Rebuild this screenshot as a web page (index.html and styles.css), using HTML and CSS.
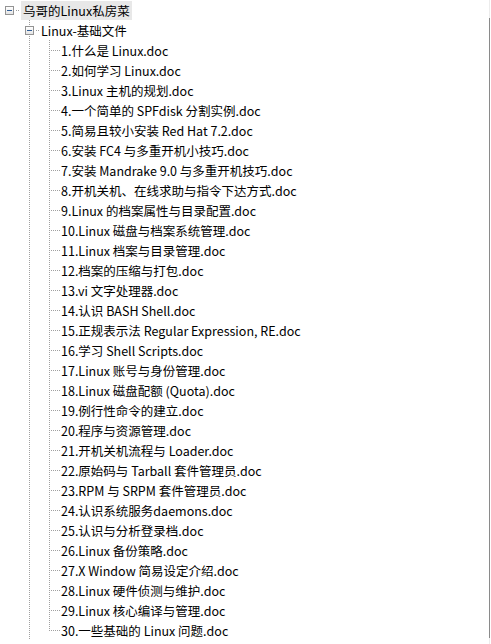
FILE: index.html
```html
<!DOCTYPE html>
<html lang="zh-CN">
<head>
<meta charset="utf-8">
<title>乌哥的Linux私房菜</title>
<link rel="stylesheet" href="styles.css">
</head>
<body>
<div class="page">
  <div class="tree">
    <div class="row">
      <span class="cell exp-root"><span class="box"><span class="minus"></span></span></span>
      <span class="label sel">乌哥的Linux私房菜</span>
    </div>
    <div class="row">
      <span class="cell"></span>
      <span class="cell exp-child"><span class="box"><span class="minus"></span></span></span>
      <span class="label">Linux-基础文件</span>
    </div>
    <div class="row"><span class="cell"></span><span class="cell vline"></span><span class="cell branch"></span><span class="label">1.什么是 Linux.doc</span></div>
    <div class="row"><span class="cell"></span><span class="cell vline"></span><span class="cell branch"></span><span class="label">2.如何学习 Linux.doc</span></div>
    <div class="row"><span class="cell"></span><span class="cell vline"></span><span class="cell branch"></span><span class="label">3.Linux 主机的规划.doc</span></div>
    <div class="row"><span class="cell"></span><span class="cell vline"></span><span class="cell branch"></span><span class="label">4.一个简单的 SPFdisk 分割实例.doc</span></div>
    <div class="row"><span class="cell"></span><span class="cell vline"></span><span class="cell branch"></span><span class="label">5.简易且较小安装 Red Hat 7.2.doc</span></div>
    <div class="row"><span class="cell"></span><span class="cell vline"></span><span class="cell branch"></span><span class="label">6.安装 FC4 与多重开机小技巧.doc</span></div>
    <div class="row"><span class="cell"></span><span class="cell vline"></span><span class="cell branch"></span><span class="label">7.安装 Mandrake 9.0 与多重开机技巧.doc</span></div>
    <div class="row"><span class="cell"></span><span class="cell vline"></span><span class="cell branch"></span><span class="label">8.开机关机、在线求助与指令下达方式.doc</span></div>
    <div class="row"><span class="cell"></span><span class="cell vline"></span><span class="cell branch"></span><span class="label">9.Linux 的档案属性与目录配置.doc</span></div>
    <div class="row"><span class="cell"></span><span class="cell vline"></span><span class="cell branch"></span><span class="label">10.Linux 磁盘与档案系统管理.doc</span></div>
    <div class="row"><span class="cell"></span><span class="cell vline"></span><span class="cell branch"></span><span class="label">11.Linux 档案与目录管理.doc</span></div>
    <div class="row"><span class="cell"></span><span class="cell vline"></span><span class="cell branch"></span><span class="label">12.档案的压缩与打包.doc</span></div>
    <div class="row"><span class="cell"></span><span class="cell vline"></span><span class="cell branch"></span><span class="label">13.vi 文字处理器.doc</span></div>
    <div class="row"><span class="cell"></span><span class="cell vline"></span><span class="cell branch"></span><span class="label">14.认识 BASH Shell.doc</span></div>
    <div class="row"><span class="cell"></span><span class="cell vline"></span><span class="cell branch"></span><span class="label">15.正规表示法 Regular Expression, RE.doc</span></div>
    <div class="row"><span class="cell"></span><span class="cell vline"></span><span class="cell branch"></span><span class="label">16.学习 Shell Scripts.doc</span></div>
    <div class="row"><span class="cell"></span><span class="cell vline"></span><span class="cell branch"></span><span class="label">17.Linux 账号与身份管理.doc</span></div>
    <div class="row"><span class="cell"></span><span class="cell vline"></span><span class="cell branch"></span><span class="label">18.Linux 磁盘配额 (Quota).doc</span></div>
    <div class="row"><span class="cell"></span><span class="cell vline"></span><span class="cell branch"></span><span class="label">19.例行性命令的建立.doc</span></div>
    <div class="row"><span class="cell"></span><span class="cell vline"></span><span class="cell branch"></span><span class="label">20.程序与资源管理.doc</span></div>
    <div class="row"><span class="cell"></span><span class="cell vline"></span><span class="cell branch"></span><span class="label">21.开机关机流程与 Loader.doc</span></div>
    <div class="row"><span class="cell"></span><span class="cell vline"></span><span class="cell branch"></span><span class="label">22.原始码与 Tarball 套件管理员.doc</span></div>
    <div class="row"><span class="cell"></span><span class="cell vline"></span><span class="cell branch"></span><span class="label">23.RPM 与 SRPM 套件管理员.doc</span></div>
    <div class="row"><span class="cell"></span><span class="cell vline"></span><span class="cell branch"></span><span class="label">24.认识系统服务daemons.doc</span></div>
    <div class="row"><span class="cell"></span><span class="cell vline"></span><span class="cell branch"></span><span class="label">25.认识与分析登录档.doc</span></div>
    <div class="row"><span class="cell"></span><span class="cell vline"></span><span class="cell branch"></span><span class="label">26.Linux 备份策略.doc</span></div>
    <div class="row"><span class="cell"></span><span class="cell vline"></span><span class="cell branch"></span><span class="label">27.X Window 简易设定介绍.doc</span></div>
    <div class="row"><span class="cell"></span><span class="cell vline"></span><span class="cell branch"></span><span class="label">28.Linux 硬件侦测与维护.doc</span></div>
    <div class="row"><span class="cell"></span><span class="cell vline"></span><span class="cell branch"></span><span class="label">29.Linux 核心编译与管理.doc</span></div>
    <div class="row"><span class="cell"></span><span class="cell vline"></span><span class="cell branch last"></span><span class="label">30.一些基础的 Linux 问题.doc</span></div>
  </div>
  <div class="edge"></div>
</div>
</body>
</html>
```

FILE: styles.css
```css
html, body {
  margin: 0;
  padding: 0;
  background: #ffffff;
}

body {
  font-family: "Noto Sans CJK SC", "Noto Sans", sans-serif;
  font-size: 12.5px;
  color: #000000;
  overflow: hidden;
}

.page {
  display: flex;
  width: 491px;
  height: 644px;
  overflow: hidden;
}

.tree {
  width: 489px;
  display: flex;
  flex-direction: column;
}

.edge {
  width: 1px;
  height: 644px;
  background: linear-gradient(to bottom, #ececec 0 18px, #8a8a8a 18px 638px, #ececec 638px);
}

.row {
  display: flex;
  align-items: center;
  height: 20px;
  flex: none;
}

.cell {
  width: 20px;
  height: 20px;
  flex: none;
  display: flex;
  align-items: center;
  background-repeat: no-repeat;
}

/* dotted guide lines */
.vline {
  background-image: repeating-linear-gradient(to bottom, #a0a0a0 0 1px, transparent 1px 2px);
  background-size: 1px 20px;
  background-position: 9px 0;
}

.branch {
  background-image:
    repeating-linear-gradient(to bottom, #a0a0a0 0 1px, transparent 1px 2px),
    repeating-linear-gradient(to right, #a0a0a0 0 1px, transparent 1px 2px);
  background-size: 1px 20px, 9px 1px;
  background-position: 9px 0, 11px 10px;
}

.branch.last {
  background-size: 1px 11px, 9px 1px;
}

.exp-root {
  background-image: repeating-linear-gradient(to right, #a0a0a0 0 1px, transparent 1px 2px);
  background-size: 5px 1px;
  background-position: 16px 10px;
}

.exp-child {
  background-image:
    repeating-linear-gradient(to bottom, #a0a0a0 0 1px, transparent 1px 2px),
    repeating-linear-gradient(to right, #a0a0a0 0 1px, transparent 1px 2px);
  background-size: 1px 20px, 5px 1px;
  background-position: 9px 0, 16px 10px;
}

.box {
  box-sizing: border-box;
  width: 9px;
  height: 9px;
  margin-left: 5px;
  border: 1px solid #939393;
  background: linear-gradient(to bottom, #ffffff, #e4e4e4);
  display: flex;
  align-items: center;
  justify-content: center;
}

.minus {
  width: 5px;
  height: 1px;
  background: #2f5d96;
}

.label {
  height: 19px;
  line-height: 19px;
  padding: 0 1px;
  white-space: nowrap;
}

.sel {
  background: #e8e8e8;
  margin-left: 1px;
  padding: 0 2px;
}
```
